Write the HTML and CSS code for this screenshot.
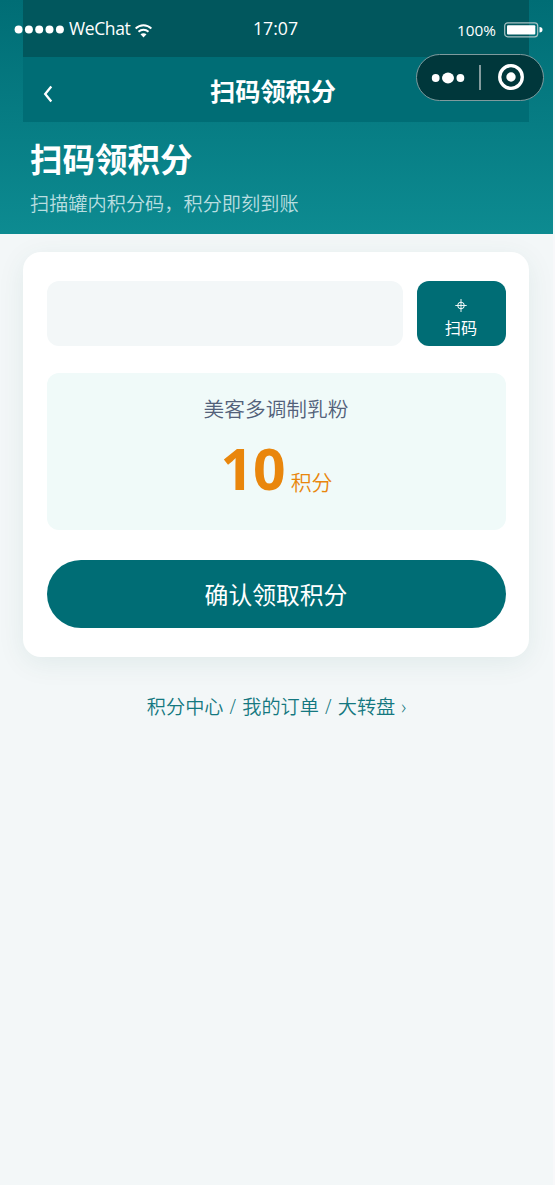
FILE: index.html
```
<!DOCTYPE html>
<html lang="zh-CN">
<head>
<meta charset="utf-8">
<title>扫码领积分</title>
<link rel="stylesheet" href="styles.css">
</head>
<body>
<div class="page">
  <header class="hero">
    <div class="nav-wrap">
      <div class="status-fill"></div>
      <nav class="nav">
        <svg class="back" viewBox="0 0 12 18"><path d="M9.300 1.600L3.200 9l6.100 7.400" fill="none" stroke="#fff" stroke-width="2.300"/></svg>
        <h1 class="nav-title">扫码领积分</h1>
      </nav>
    </div>
    <h2 class="hero-title">扫码领积分</h2>
    <p class="hero-sub">扫描罐内积分码，积分即刻到账</p>
    <div class="status">
      <svg class="signal" viewBox="0 0 50 9" fill="#fff"><circle cx="4.600" cy="4.500" r="4"/><circle cx="14.900" cy="4.500" r="4"/><circle cx="25.200" cy="4.500" r="4"/><circle cx="35.500" cy="4.500" r="4"/><circle cx="45.900" cy="4.500" r="4"/></svg>
      <span class="carrier">WeChat</span>
      <svg class="wifi" viewBox="0 0 17 14"><g fill="none" stroke="#fff" stroke-width="1.900"><path d="M.6 4.500C5.200 .1 11.800 .1 16.400 4.500"/><path d="M3.500 7.800C6.300 5.100 10.700 5.100 13.500 7.800"/></g><path d="M5.500 10.300C7.200 8.900 9.800 8.900 11.500 10.300L8.500 13.500Z" fill="#fff"/></svg>
      <span class="time">17:07</span>
      <span class="percent">100%</span>
      <svg class="battery" viewBox="0 0 39 16"><rect x=".7" y=".8" width="33" height="14" rx="3" fill="none" stroke="#a9c2c3" stroke-width="1.200"/><rect x="3" y="3.200" width="28.300" height="9.200" rx="1" fill="#fff"/><path d="M35.500 5Q38.500 5 38.500 7.800Q38.500 10.500 35.500 10.500Z" fill="#fff"/></svg>
    </div>
    <div class="capsule">
      <svg class="dots" viewBox="0 0 34 12" fill="#fff"><circle cx="4.700" cy="6" r="3.900"/><ellipse cx="17" cy="6" rx="6" ry="5.400"/><circle cx="29.400" cy="6" r="3.900"/></svg>
      <span class="divider"></span>
      <svg class="target" viewBox="0 0 26 26"><circle cx="13" cy="13" r="11.300" fill="none" stroke="#fff" stroke-width="3.300"/><circle cx="13" cy="13" r="4.700" fill="#fff"/></svg>
    </div>
  </header>
  <main class="card">
    <div class="scan-row">
      <input class="code-input" type="text" aria-label="积分码">
      <button class="scan-btn">
        <svg class="cross" viewBox="0 0 12 13" fill="none" stroke="#fff"><circle cx="6" cy="6.500" r="3.300" stroke-width="1"/><path d="M6 0v13M.3 6.500h11.400" stroke-width=".9"/></svg>
        <span>扫码</span>
      </button>
    </div>
    <section class="reward">
      <p class="product">美客多调制乳粉</p>
      <p class="points"><strong class="amount">10</strong><span class="unit">积分</span></p>
    </section>
    <button class="confirm">确认领取积分</button>
  </main>
  <a class="links">积分中心 / 我的订单 / 大转盘 ›</a>
</div>
</body>
</html>
```
FILE: styles.css
```
* { box-sizing: border-box; margin: 0; padding: 0; }
body {
  background: #f8f8fa;
  font-family: "Open Sans", "Noto Sans CJK SC", sans-serif;
}
button, input { border: 0; font-family: inherit; }
svg { display: block; flex: none; }
.page { width: 553px; height: 1185px; background: #f3f7f8; overflow: hidden; }
.hero {
  position: relative;
  height: 234px;
  padding: 0 23px;
  background: linear-gradient(180deg, #006d75, #0d8b91);
  color: #fff;
}
.nav-wrap { height: 122px; margin-right: 1px; background: #006d75; }
.status-fill { height: 57px; background: #01575d; }
.nav { height: 65px; display: grid; grid-template-columns: 60px 1fr 60px; align-items: center; }
.back { width: 12px; height: 18px; margin: 8px 0 0 19px; }
.nav-title { font-size: 25.200px; line-height: 36px; text-align: center; margin: 2px 0 0 -6px; }
.hero-title { font-size: 32.500px; line-height: 46px; margin: 15px 0 0 7px; }
.hero-sub { font-size: 19.200px; line-height: 28px; margin: 7px 0 0 7px; color: #b9dee0; font-weight: 350; }
.status {
  position: absolute;
  inset: 0 0 auto 0;
  height: 57px;
  padding: 0 10px 0 14px;
  display: flex;
  align-items: center;
}
.signal { width: 50px; height: 9px; margin-top: 2px; }
.carrier { width: 62px; margin: -2px 0 0 5px; font-size: 17.500px; letter-spacing: -.4px; }
.wifi { width: 17px; height: 14px; margin: 4px 0 0 4px; }
.time { margin: -1px 0 0 101px; width: 50px; font-size: 17.700px; }
.percent { margin: 3px 8px 0 auto; font-size: 15.300px; }
.battery { width: 39px; height: 16px; margin-top: 3px; }
.capsule {
  position: absolute;
  top: 54px;
  right: 9px;
  width: 128px;
  height: 47px;
  border: 1px solid #7f9b9e;
  border-radius: 24px;
  background: #00373b;
  display: flex;
  align-items: center;
  padding-left: 14px;
}
.dots { width: 34px; height: 12px; }
.divider { width: 2px; height: 25px; margin-left: 14px; background: #849b9d; }
.target { width: 26px; height: 26px; margin: -1px 0 0 17px; }
.card {
  width: 506px;
  height: 405px;
  margin: 18px 0 0 23px;
  padding: 29px 23.500px;
  background: #fff;
  border-radius: 18px;
  box-shadow: 0 6px 28px rgba(0, 92, 82, .08);
}
.scan-row { display: flex; gap: 14px; }
.code-input { width: 356px; height: 65px; border-radius: 12px; background: #f3f7f8; }
.scan-btn {
  width: 89px;
  height: 65px;
  border-radius: 12px;
  background: #006d75;
  color: #fff;
  font-size: 16.200px;
  line-height: 22px;
  display: flex;
  flex-direction: column;
  align-items: center;
  padding-top: 18px;
}
.cross { width: 12px; height: 13px; margin-bottom: 5px; }
.reward {
  height: 157px;
  margin-top: 27px;
  padding-top: 21px;
  border-radius: 12px;
  background: #f0faf9;
  text-align: center;
}
.product { font-size: 20.700px; line-height: 30px; color: #53617a; font-weight: 350; }
.points { display: flex; justify-content: center; align-items: baseline; gap: 5px; height: 84px; margin: -1px 0 0 1px; color: #e9860c; }
.amount { font-size: 57px; line-height: 90px; }
.unit { font-size: 20.900px; font-weight: 350; }
.confirm {
  display: block;
  width: 459px;
  height: 68px;
  margin-top: 29.500px;
  border-radius: 34px;
  background: #006d75;
  color: #fff;
  font-size: 23.800px;
}
.links {
  display: block;
  margin-top: 35px;
  color: #147880;
  font-size: 19.200px;
  line-height: 30px;
  text-align: center;
  font-weight: 350;
  word-spacing: 1.100px;
}
```
